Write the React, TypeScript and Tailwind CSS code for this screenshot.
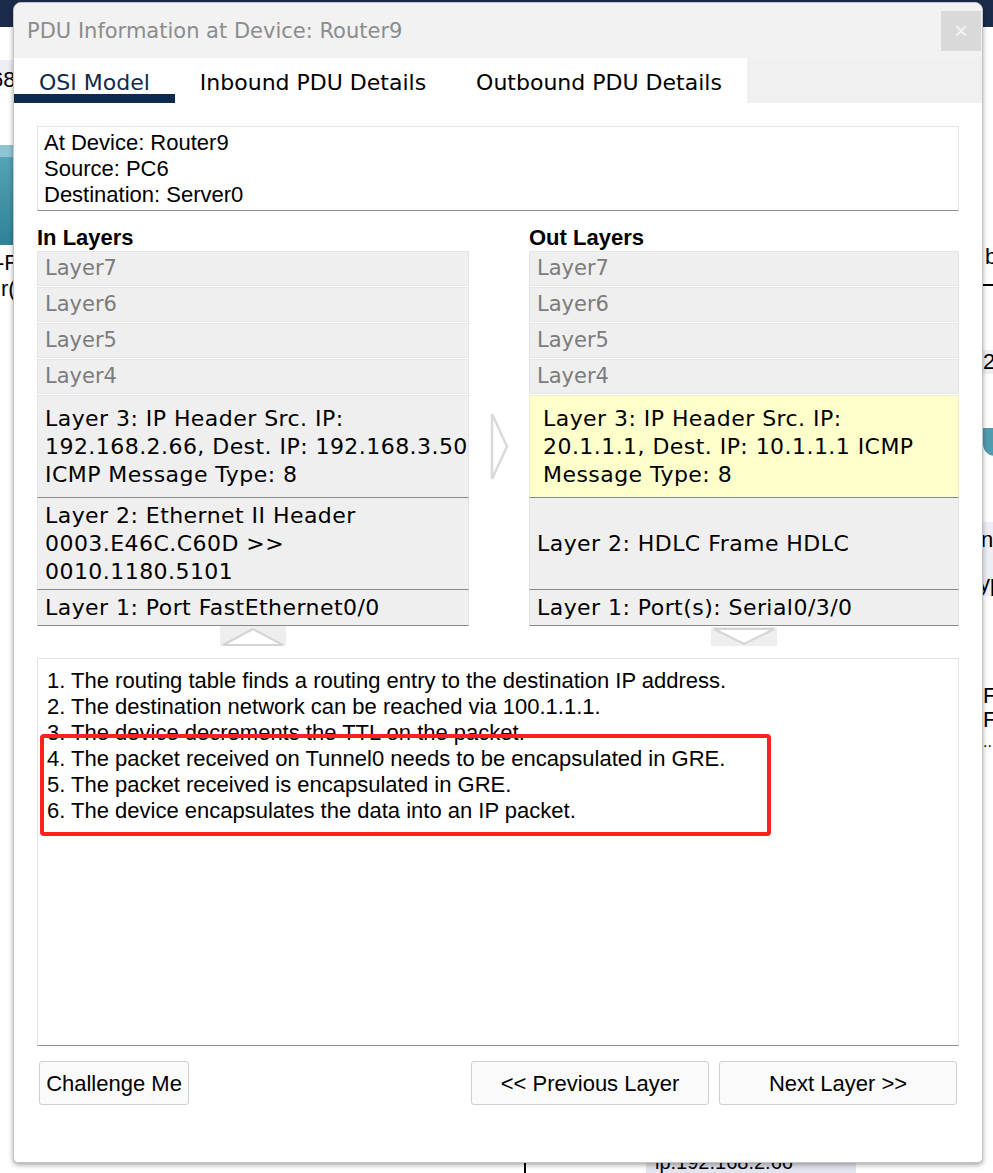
const layerFont = "font-['DejaVu_Sans',Verdana,sans-serif] tracking-[0.45px]";

function GrayLayer({ label }: { label: string }) {
  return (
    <div className="flex h-[35px] items-center border border-[#e4e4e4] bg-[#efefef] pl-[7px] font-['DejaVu_Sans',Verdana,sans-serif] text-[21px] text-[#7c7c7c]">
      {label}
    </div>
  );
}

function UpChevron() {
  return (
    <div className="mx-auto h-[20px] w-[66px] bg-[#eeeeee]">
      <svg width="66" height="20" viewBox="0 0 66 20">
        <polygon points="3,19 33,3 63,19" fill="#ffffff" stroke="#d4d4d4" strokeWidth="2" />
      </svg>
    </div>
  );
}

function DownChevron() {
  return (
    <div className="mx-auto mt-[1px] h-[19px] w-[66px] bg-[#eeeeee]">
      <svg width="66" height="19" viewBox="0 0 66 19">
        <polygon points="3,2 33,17 63,2" fill="#ffffff" stroke="#d4d4d4" strokeWidth="2" />
      </svg>
    </div>
  );
}

export default function App() {
  return (
    <div className="relative h-[1173px] w-[993px] overflow-hidden bg-white font-['Liberation_Sans',Arial,sans-serif] text-black">
      {/* workspace behind the dialog */}
      <div className="absolute inset-x-0 top-0 h-[27px] bg-[#1b2b4b]" />
      <div className="absolute left-0 top-[60px] h-[18px] w-[13px] bg-[#eeeef5]" />
      <span className="absolute left-[-9px] top-[70px] text-[22px] leading-[20px]">68</span>
      <div className="absolute left-0 top-[145px] h-[100px] w-[13px] bg-gradient-to-b from-[#5aa7ba] to-[#2f8299]">
        <div className="h-[12px] bg-[#8fc5d2]" />
      </div>
      <span className="absolute left-[-3px] top-[251px] text-[22px] leading-[24px]">-F</span>
      <span className="absolute left-[1px] top-[277px] text-[22px] leading-[24px]">r(</span>

      <span className="absolute left-[985px] top-[245px] text-[22px] leading-[24px]">b</span>
      <div className="absolute left-[983px] top-[284px] h-[2px] w-[10px] bg-black" />
      <div className="absolute left-[983px] top-[350px] h-[24px] w-[10px] bg-[#eeeef5]" />
      <span className="absolute left-[983px] top-[350px] text-[22px] leading-[24px]">2</span>
      <div className="absolute left-[983px] top-[428px] h-[28px] w-[12px] rounded-bl-[12px] bg-[#4f9bb0]" />
      <div className="absolute left-[983px] top-[522px] h-[74px] w-[10px] bg-[#eeeef5]" />
      <span className="absolute left-[981px] top-[528px] text-[22px] leading-[24px]">n</span>
      <span className="absolute left-[979px] top-[572px] text-[22px] leading-[24px]">yp</span>
      <span className="absolute left-[983px] top-[684px] text-[22px] leading-[24px]">F</span>
      <span className="absolute left-[983px] top-[708px] text-[22px] leading-[24px]">F</span>
      <span className="absolute left-[983px] top-[736px] text-[16px] leading-[12px]">...</span>

      <div className="absolute left-[524px] top-[1140px] h-[33px] w-[2px] bg-black" />
      <div className="absolute left-[646px] top-[1140px] h-[33px] w-[210px] bg-[#e4e4ee]" />
      <span className="absolute left-[655px] top-[1150px] text-[20px] leading-[24px]">ip:192.168.2.66</span>

      {/* dialog */}
      <div className="relative ml-[13px] mt-[2px] flex h-[1161px] w-[970px] flex-col overflow-hidden rounded-t-[8px] rounded-b-[5px] border border-[#c4c4c4] bg-white shadow-[0_2px_5px_rgba(0,0,0,0.35)]">
        <div className="flex h-[55px] shrink-0 items-center justify-between bg-[#f2f2f2] pl-[13px] pr-[1px]">
          <span className="font-['DejaVu_Sans',Verdana,sans-serif] text-[21px] leading-[28px] text-[#8c8c8c]">
            PDU Information at Device: Router9
          </span>
          <div className="flex h-[40px] w-[40px] items-center justify-center bg-[#d9d9d9] text-[24px] leading-none text-[#f4f4f4]">
            ×
          </div>
        </div>

        <div className="flex h-[45px] shrink-0 font-['DejaVu_Sans',Verdana,sans-serif] text-[22px] leading-[28px]">
          <div className="h-full px-[25px] pt-[11px] text-[#0e2a50] shadow-[inset_0_-9px_0_#0e2a50]">OSI Model</div>
          <div className="h-full px-[25px] pt-[11px]">Inbound PDU Details</div>
          <div className="h-full px-[25px] pt-[11px]">Outbound PDU Details</div>
          <div className="h-full flex-1 bg-[#f0f0f0]" />
        </div>

        <div className="flex flex-col px-[23px]">
          <div className="mt-[23px] border border-[#e3e3e3] border-b-[#8f8f8f] pb-[2px] pl-[6px] pt-[3px] text-[22px] leading-[26px]">
            <div>At Device: Router9</div>
            <div>Source: PC6</div>
            <div>Destination: Server0</div>
          </div>

          <div className="mt-[15px] grid grid-cols-[432px_60px_430px]">
            <div className="flex flex-col">
              <div className="mb-[1px] text-[22px] font-bold leading-[24px]">In Layers</div>
              <div className="flex flex-col gap-[1px]">
                <GrayLayer label="Layer7" />
                <GrayLayer label="Layer6" />
                <GrayLayer label="Layer5" />
                <GrayLayer label="Layer4" />
                <div className={`flex flex-col ${layerFont} text-[22px] leading-[28px]`}>
                  <div className="flex h-[103px] flex-col justify-center whitespace-nowrap border border-[#e4e4e4] border-b-[#8a8a8a] bg-[#efefef] pl-[7px]">
                    <div>Layer 3: IP Header Src. IP:</div>
                    <div>192.168.2.66, Dest. IP: 192.168.3.50</div>
                    <div>ICMP Message Type: 8</div>
                  </div>
                  <div className="flex h-[92px] flex-col justify-center whitespace-nowrap border-x border-[#e4e4e4] border-b border-b-[#8a8a8a] bg-[#efefef] pl-[7px]">
                    <div>Layer 2: Ethernet II Header</div>
                    <div>0003.E46C.C60D &gt;&gt;</div>
                    <div>0010.1180.5101</div>
                  </div>
                  <div className="flex h-[36px] items-center whitespace-nowrap border-x border-[#e4e4e4] border-b border-b-[#8a8a8a] bg-[#efefef] pl-[7px]">
                    Layer 1: Port FastEthernet0/0
                  </div>
                </div>
              </div>
              <UpChevron />
            </div>

            <div className="flex justify-center pt-[187px]">
              <svg width="19" height="67" viewBox="0 0 19 67">
                <polygon points="2,1 17,33.5 2,66" fill="#ffffff" stroke="#dadada" strokeWidth="2.5" />
              </svg>
            </div>

            <div className="flex flex-col">
              <div className="mb-[1px] text-[22px] font-bold leading-[24px]">Out Layers</div>
              <div className="flex flex-col gap-[1px]">
                <GrayLayer label="Layer7" />
                <GrayLayer label="Layer6" />
                <GrayLayer label="Layer5" />
                <GrayLayer label="Layer4" />
                <div className={`flex flex-col ${layerFont} text-[22px] leading-[28px]`}>
                  <div className="flex h-[103px] flex-col justify-center whitespace-nowrap border border-[#ececc8] border-b-[#8a8a8a] bg-[#ffffcc] pl-[13px]">
                    <div>Layer 3: IP Header Src. IP:</div>
                    <div>20.1.1.1, Dest. IP: 10.1.1.1 ICMP</div>
                    <div>Message Type: 8</div>
                  </div>
                  <div className="flex h-[92px] items-center whitespace-nowrap border-x border-[#e4e4e4] border-b border-b-[#8a8a8a] bg-[#efefef] pl-[7px]">
                    Layer 2: HDLC Frame HDLC
                  </div>
                  <div className="flex h-[36px] items-center whitespace-nowrap border-x border-[#e4e4e4] border-b border-b-[#8a8a8a] bg-[#efefef] pl-[7px]">
                    Layer 1: Port(s): Serial0/3/0
                  </div>
                </div>
              </div>
              <DownChevron />
            </div>
          </div>

          <div className="relative mt-[12px] h-[388px] border border-[#e3e3e3] border-b-[#8f8f8f] pl-[9px] pt-[9px] text-[22px] leading-[26px]">
            <div>1. The routing table finds a routing entry to the destination IP address.</div>
            <div>2. The destination network can be reached via 100.1.1.1.</div>
            <div>3. The device decrements the TTL on the packet.</div>
            <div>4. The packet received on Tunnel0 needs to be encapsulated in GRE.</div>
            <div>5. The packet received is encapsulated in GRE.</div>
            <div>6. The device encapsulates the data into an IP packet.</div>
            <div className="absolute left-[2px] top-[75px] h-[102px] w-[731px] rounded-[4px] border-[4px] border-[#ff2020]" />
          </div>

          <div className="mt-[15px] flex justify-between px-[2px] text-[22px]">
            <button className="h-[44px] w-[150px] rounded-[3px] border border-[#cfcfcf] bg-[#fafafa]">Challenge Me</button>
            <div className="flex gap-[10px]">
              <button className="h-[44px] w-[238px] rounded-[3px] border border-[#cfcfcf] bg-[#fafafa]">&lt;&lt; Previous Layer</button>
              <button className="h-[44px] w-[238px] rounded-[3px] border border-[#cfcfcf] bg-[#fafafa]">Next Layer &gt;&gt;</button>
            </div>
          </div>
        </div>
      </div>
    </div>
  );
}
